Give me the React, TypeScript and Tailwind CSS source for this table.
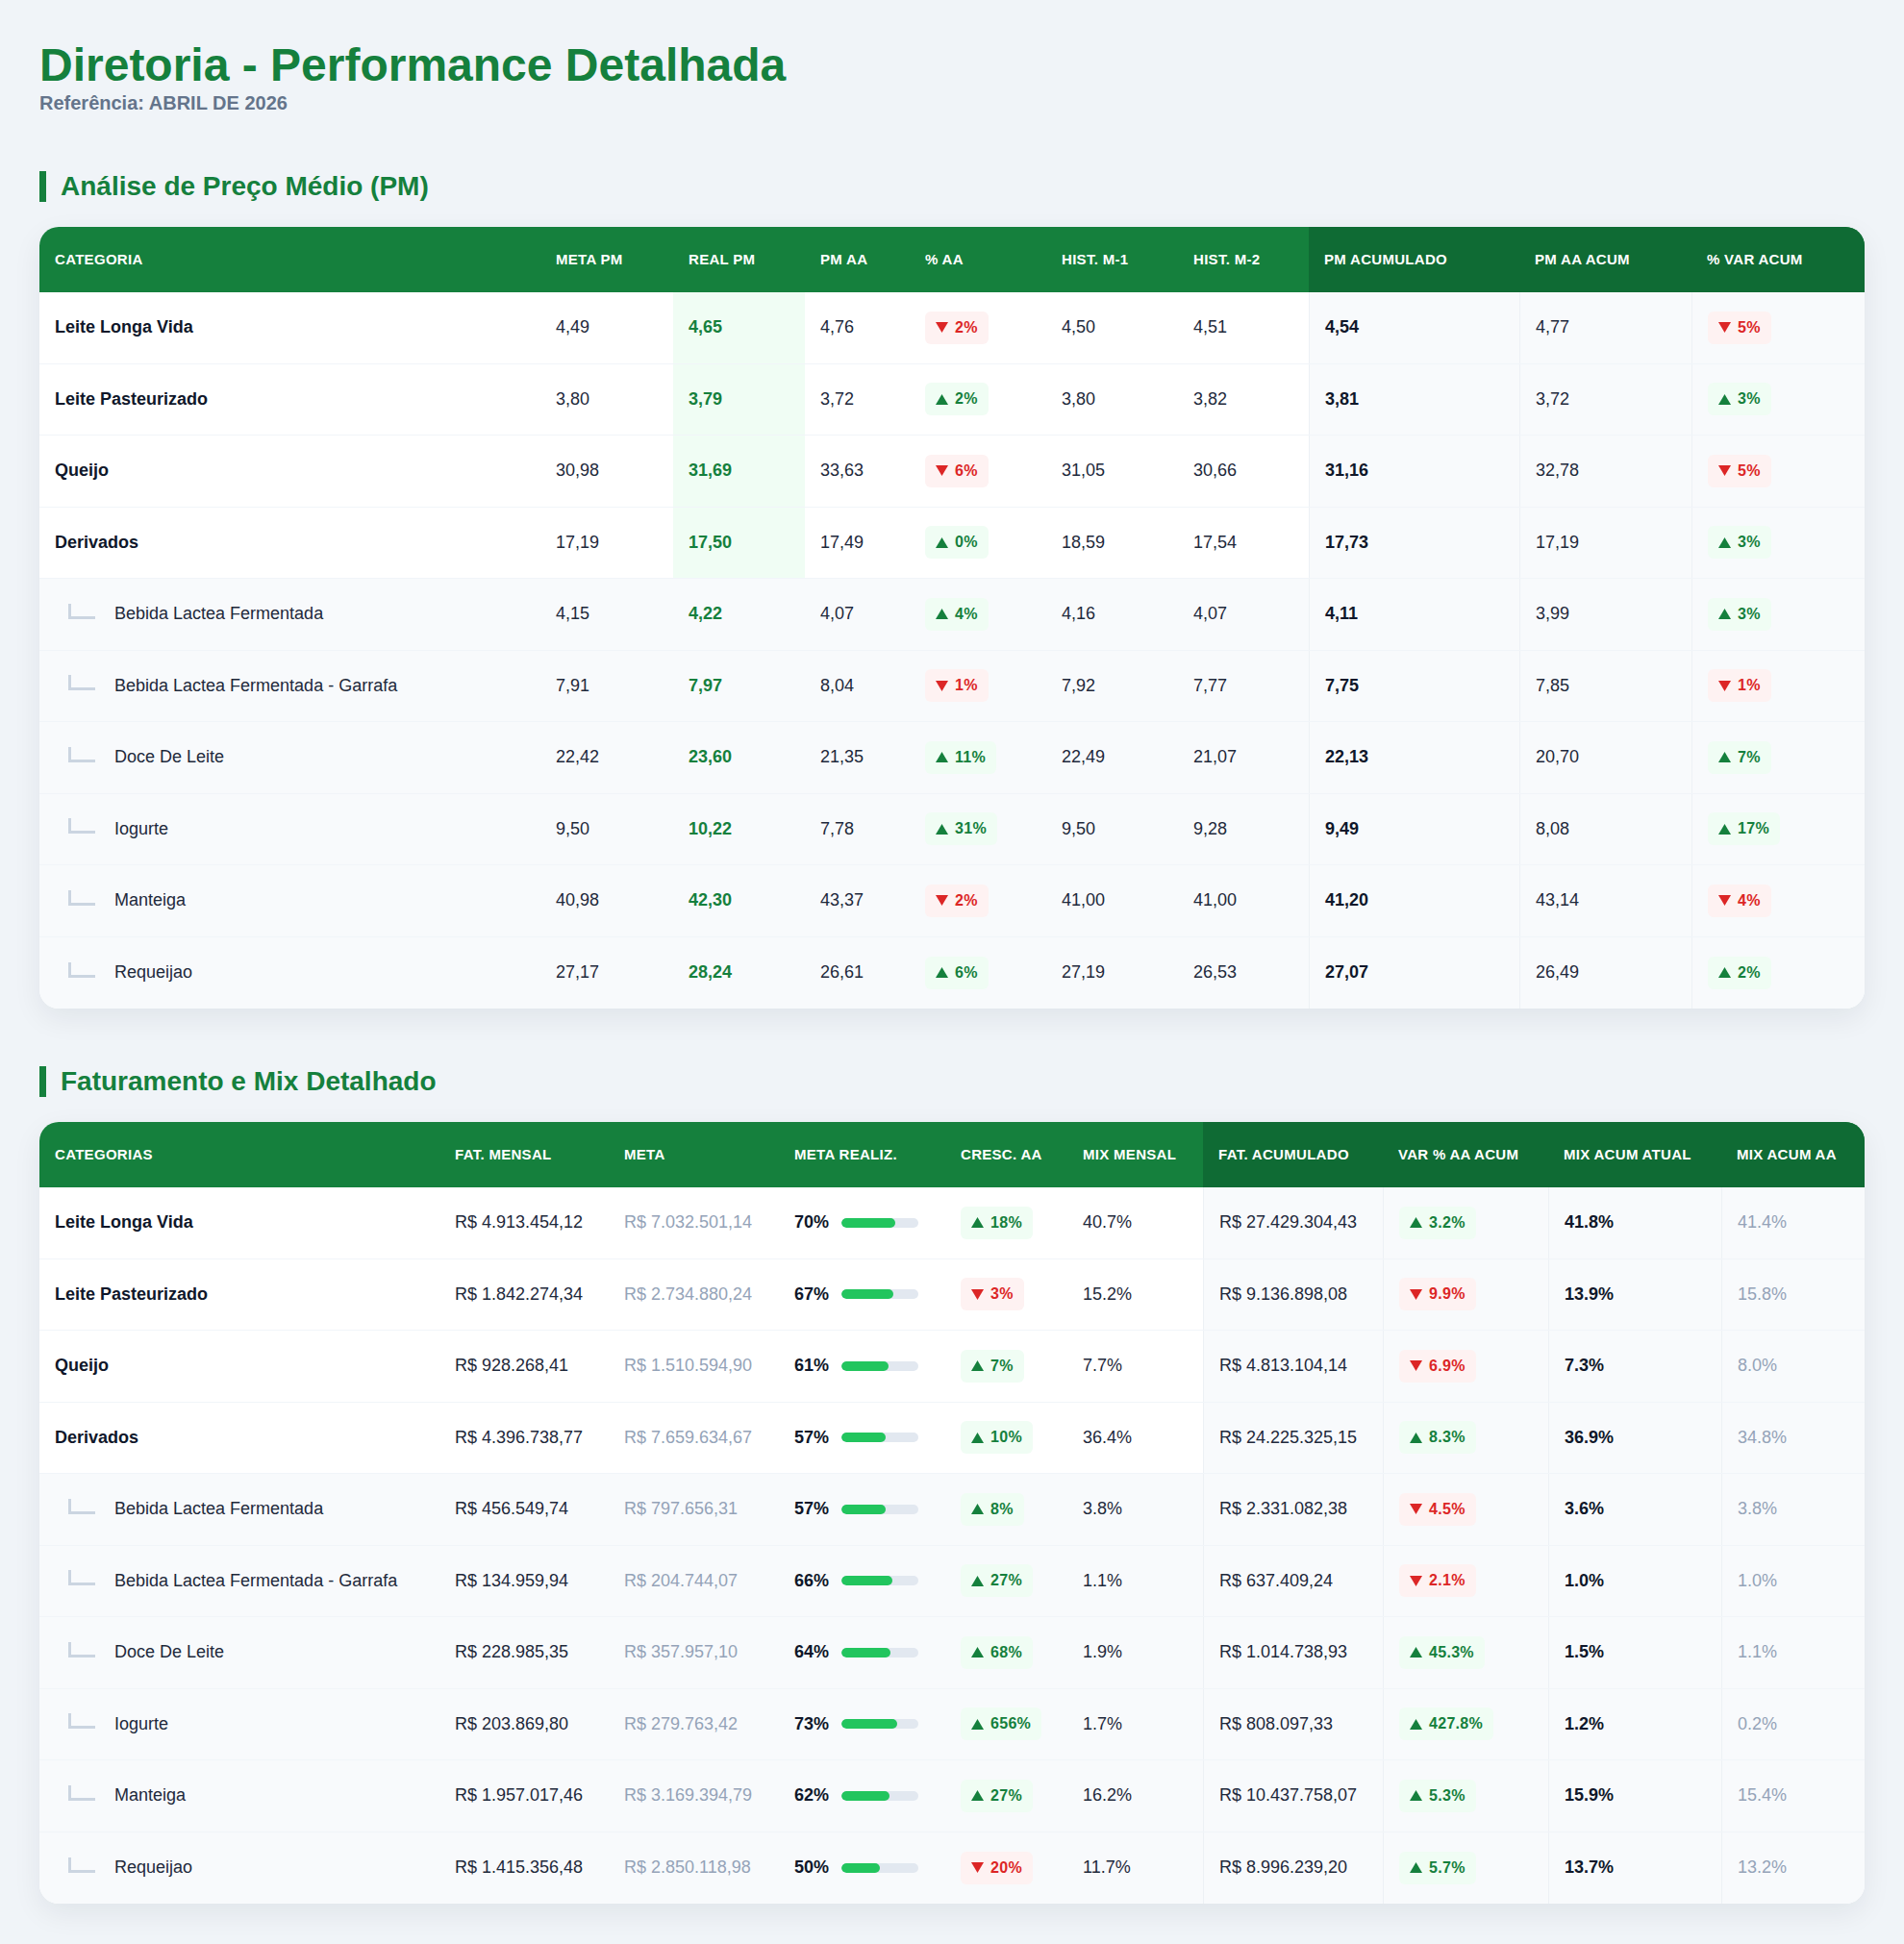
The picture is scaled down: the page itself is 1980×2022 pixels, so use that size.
import React from "react";

type Trend = { up: boolean; v: string };

type PmRow = {
	name: string;
	sub?: boolean;
	meta: string;
	real: string;
	aa: string;
	pAA: Trend;
	h1: string;
	h2: string;
	acum: string;
	aaAcum: string;
	pVar: Trend;
};

type FatRow = {
	name: string;
	sub?: boolean;
	fat: string;
	meta: string;
	realiz: number;
	cresc: Trend;
	mix: string;
	fatAcum: string;
	varAcum: Trend;
	mixAtual: string;
	mixAA: string;
};

const up = (v: string): Trend => ({ up: true, v });
const down = (v: string): Trend => ({ up: false, v });

const pmRows: PmRow[] = [
	{ name: "Leite Longa Vida", meta: "4,49", real: "4,65", aa: "4,76", pAA: down("2%"), h1: "4,50", h2: "4,51", acum: "4,54", aaAcum: "4,77", pVar: down("5%") },
	{ name: "Leite Pasteurizado", meta: "3,80", real: "3,79", aa: "3,72", pAA: up("2%"), h1: "3,80", h2: "3,82", acum: "3,81", aaAcum: "3,72", pVar: up("3%") },
	{ name: "Queijo", meta: "30,98", real: "31,69", aa: "33,63", pAA: down("6%"), h1: "31,05", h2: "30,66", acum: "31,16", aaAcum: "32,78", pVar: down("5%") },
	{ name: "Derivados", meta: "17,19", real: "17,50", aa: "17,49", pAA: up("0%"), h1: "18,59", h2: "17,54", acum: "17,73", aaAcum: "17,19", pVar: up("3%") },
	{ name: "Bebida Lactea Fermentada", sub: true, meta: "4,15", real: "4,22", aa: "4,07", pAA: up("4%"), h1: "4,16", h2: "4,07", acum: "4,11", aaAcum: "3,99", pVar: up("3%") },
	{ name: "Bebida Lactea Fermentada - Garrafa", sub: true, meta: "7,91", real: "7,97", aa: "8,04", pAA: down("1%"), h1: "7,92", h2: "7,77", acum: "7,75", aaAcum: "7,85", pVar: down("1%") },
	{ name: "Doce De Leite", sub: true, meta: "22,42", real: "23,60", aa: "21,35", pAA: up("11%"), h1: "22,49", h2: "21,07", acum: "22,13", aaAcum: "20,70", pVar: up("7%") },
	{ name: "Iogurte", sub: true, meta: "9,50", real: "10,22", aa: "7,78", pAA: up("31%"), h1: "9,50", h2: "9,28", acum: "9,49", aaAcum: "8,08", pVar: up("17%") },
	{ name: "Manteiga", sub: true, meta: "40,98", real: "42,30", aa: "43,37", pAA: down("2%"), h1: "41,00", h2: "41,00", acum: "41,20", aaAcum: "43,14", pVar: down("4%") },
	{ name: "Requeijao", sub: true, meta: "27,17", real: "28,24", aa: "26,61", pAA: up("6%"), h1: "27,19", h2: "26,53", acum: "27,07", aaAcum: "26,49", pVar: up("2%") },
];

const fatRows: FatRow[] = [
	{ name: "Leite Longa Vida", fat: "R$ 4.913.454,12", meta: "R$ 7.032.501,14", realiz: 70, cresc: up("18%"), mix: "40.7%", fatAcum: "R$ 27.429.304,43", varAcum: up("3.2%"), mixAtual: "41.8%", mixAA: "41.4%" },
	{ name: "Leite Pasteurizado", fat: "R$ 1.842.274,34", meta: "R$ 2.734.880,24", realiz: 67, cresc: down("3%"), mix: "15.2%", fatAcum: "R$ 9.136.898,08", varAcum: down("9.9%"), mixAtual: "13.9%", mixAA: "15.8%" },
	{ name: "Queijo", fat: "R$ 928.268,41", meta: "R$ 1.510.594,90", realiz: 61, cresc: up("7%"), mix: "7.7%", fatAcum: "R$ 4.813.104,14", varAcum: down("6.9%"), mixAtual: "7.3%", mixAA: "8.0%" },
	{ name: "Derivados", fat: "R$ 4.396.738,77", meta: "R$ 7.659.634,67", realiz: 57, cresc: up("10%"), mix: "36.4%", fatAcum: "R$ 24.225.325,15", varAcum: up("8.3%"), mixAtual: "36.9%", mixAA: "34.8%" },
	{ name: "Bebida Lactea Fermentada", sub: true, fat: "R$ 456.549,74", meta: "R$ 797.656,31", realiz: 57, cresc: up("8%"), mix: "3.8%", fatAcum: "R$ 2.331.082,38", varAcum: down("4.5%"), mixAtual: "3.6%", mixAA: "3.8%" },
	{ name: "Bebida Lactea Fermentada - Garrafa", sub: true, fat: "R$ 134.959,94", meta: "R$ 204.744,07", realiz: 66, cresc: up("27%"), mix: "1.1%", fatAcum: "R$ 637.409,24", varAcum: down("2.1%"), mixAtual: "1.0%", mixAA: "1.0%" },
	{ name: "Doce De Leite", sub: true, fat: "R$ 228.985,35", meta: "R$ 357.957,10", realiz: 64, cresc: up("68%"), mix: "1.9%", fatAcum: "R$ 1.014.738,93", varAcum: up("45.3%"), mixAtual: "1.5%", mixAA: "1.1%" },
	{ name: "Iogurte", sub: true, fat: "R$ 203.869,80", meta: "R$ 279.763,42", realiz: 73, cresc: up("656%"), mix: "1.7%", fatAcum: "R$ 808.097,33", varAcum: up("427.8%"), mixAtual: "1.2%", mixAA: "0.2%" },
	{ name: "Manteiga", sub: true, fat: "R$ 1.957.017,46", meta: "R$ 3.169.394,79", realiz: 62, cresc: up("27%"), mix: "16.2%", fatAcum: "R$ 10.437.758,07", varAcum: up("5.3%"), mixAtual: "15.9%", mixAA: "15.4%" },
	{ name: "Requeijao", sub: true, fat: "R$ 1.415.356,48", meta: "R$ 2.850.118,98", realiz: 50, cresc: down("20%"), mix: "11.7%", fatAcum: "R$ 8.996.239,20", varAcum: up("5.7%"), mixAtual: "13.7%", mixAA: "13.2%" },
];

const pmCols = "grid grid-cols-[521px_138px_137px_109px_142px_137px_136px_219px_179px_180px]";
const fatCols = "grid grid-cols-[416px_176px_177px_173px_127px_141px_187px_172px_180px_149px]";

const Badge = ({ t }: { t: Trend }) => (
	<span
		className={
			t.up
				? "inline-flex h-[34px] items-center rounded-md bg-[#f0fdf4] px-[11px] text-[16px] font-bold tracking-[0.3px] text-[#15803d]"
				: "inline-flex h-[34px] items-center rounded-md bg-[#fef2f2] px-[11px] text-[16px] font-bold tracking-[0.3px] text-[#dc2626]"
		}
	>
		<svg width="13" height="11" viewBox="0 0 13 11" className="mr-[7px] shrink-0">
			<path d={t.up ? "M6.5 0L13 11H0Z" : "M0 0H13L6.5 11Z"} fill="currentColor" />
		</svg>
		{t.v}
	</span>
);

const Cell = ({ children, className = "" }: { children?: React.ReactNode; className?: string }) => (
	<div className={`flex items-center px-4 ${className}`}>{children}</div>
);

const Acum = ({ children, className = "" }: { children?: React.ReactNode; className?: string }) => (
	<div className={`flex items-center border-l border-[#edf1f5] bg-[#f8fafc] px-4 ${className}`}>{children}</div>
);

const Category = ({ name, sub }: { name: string; sub?: boolean }) =>
	sub ? (
		<Cell>
			<span className="ml-[14px] mr-5 h-[16px] w-[28px] -translate-y-[3px] border-b-[3px] border-l-[3px] border-[#cbd5e1]" />
			<span className="text-[#1e293b]">{name}</span>
		</Cell>
	) : (
		<Cell className="font-bold text-[#0f172a]">{name}</Cell>
	);

const HeadCell = ({ label, dark }: { label: string; dark?: boolean }) => (
	<div className={`flex items-center px-4 ${dark ? "bg-[#0f6b34]" : ""}`}>{label}</div>
);

const SectionTitle = ({ children, className = "" }: { children: React.ReactNode; className?: string }) => (
	<h2 className={`mb-[26px] border-l-[7px] border-[#15803d] pl-[15px] text-[28px] leading-[32px] font-bold text-[#15803d] ${className}`}>
		{children}
	</h2>
);

const PmTable = () => (
	<div className="overflow-hidden rounded-[20px] bg-white shadow-[0_10px_30px_rgba(15,23,42,0.07)]">
		<div className={`${pmCols} h-[68px] bg-[#15803d] text-[15px] font-bold tracking-[0.3px] text-white uppercase`}>
			<HeadCell label="Categoria" />
			<HeadCell label="Meta PM" />
			<HeadCell label="Real PM" />
			<HeadCell label="PM AA" />
			<HeadCell label="% AA" />
			<HeadCell label="Hist. M-1" />
			<HeadCell label="Hist. M-2" />
			<HeadCell label="PM Acumulado" dark />
			<HeadCell label="PM AA Acum" dark />
			<HeadCell label="% Var Acum" dark />
		</div>
		{pmRows.map((r) => (
			<div
				key={r.name}
				className={`${pmCols} h-[74.5px] border-b border-[#f1f5f9] text-[18px] text-[#1e293b] last:border-b-0 ${r.sub ? "bg-[#f8fafc]" : "bg-white"}`}
			>
				<Category name={r.name} sub={r.sub} />
				<Cell>{r.meta}</Cell>
				<Cell className={`font-bold text-[#15803d] ${r.sub ? "" : "bg-[#f0fdf4]"}`}>{r.real}</Cell>
				<Cell>{r.aa}</Cell>
				<Cell>
					<Badge t={r.pAA} />
				</Cell>
				<Cell>{r.h1}</Cell>
				<Cell>{r.h2}</Cell>
				<Acum className="font-bold text-[#0f172a]">{r.acum}</Acum>
				<Acum>{r.aaAcum}</Acum>
				<Acum>
					<Badge t={r.pVar} />
				</Acum>
			</div>
		))}
	</div>
);

const FatTable = () => (
	<div className="overflow-hidden rounded-[20px] bg-white shadow-[0_10px_30px_rgba(15,23,42,0.07)]">
		<div className={`${fatCols} h-[68px] bg-[#15803d] text-[15px] font-bold tracking-[0.3px] text-white uppercase`}>
			<HeadCell label="Categorias" />
			<HeadCell label="Fat. Mensal" />
			<HeadCell label="Meta" />
			<HeadCell label="Meta Realiz." />
			<HeadCell label="Cresc. AA" />
			<HeadCell label="Mix Mensal" />
			<HeadCell label="Fat. Acumulado" dark />
			<HeadCell label="Var % AA Acum" dark />
			<HeadCell label="Mix Acum Atual" dark />
			<HeadCell label="Mix Acum AA" dark />
		</div>
		{fatRows.map((r) => (
			<div
				key={r.name}
				className={`${fatCols} h-[74.5px] border-b border-[#f1f5f9] text-[18px] text-[#1e293b] last:border-b-0 ${r.sub ? "bg-[#f8fafc]" : "bg-white"}`}
			>
				<Category name={r.name} sub={r.sub} />
				<Cell>{r.fat}</Cell>
				<Cell className="text-[#94a3b8]">{r.meta}</Cell>
				<Cell className="gap-[13px]">
					<span className="font-bold text-[#0f172a]">{r.realiz}%</span>
					<div className="h-[10px] w-[80px] overflow-hidden rounded-full bg-[#e2e8f0]">
						<div className="h-full rounded-full bg-[#22c55e]" style={{ width: `${r.realiz}%` }} />
					</div>
				</Cell>
				<Cell>
					<Badge t={r.cresc} />
				</Cell>
				<Cell>{r.mix}</Cell>
				<Acum>{r.fatAcum}</Acum>
				<Acum>
					<Badge t={r.varAcum} />
				</Acum>
				<Acum className="font-bold text-[#0f172a]">{r.mixAtual}</Acum>
				<Acum className="text-[#94a3b8]">{r.mixAA}</Acum>
			</div>
		))}
	</div>
);

export default function App() {
	return (
		<div className="min-h-screen bg-[#f0f4f8] px-[41px] pt-[44px] pb-[41px] font-['Liberation_Sans',Arial,sans-serif]">
			<h1 className="text-[48px] leading-[48px] font-bold text-[#15803d]">Diretoria - Performance Detalhada</h1>
			<p className="text-[20px] leading-[30px] font-bold text-[#64748b]">Referência: ABRIL DE 2026</p>

			<SectionTitle className="mt-[56px]">Análise de Preço Médio (PM)</SectionTitle>
			<PmTable />

			<SectionTitle className="mt-[60px]">Faturamento e Mix Detalhado</SectionTitle>
			<FatTable />
		</div>
	);
}
